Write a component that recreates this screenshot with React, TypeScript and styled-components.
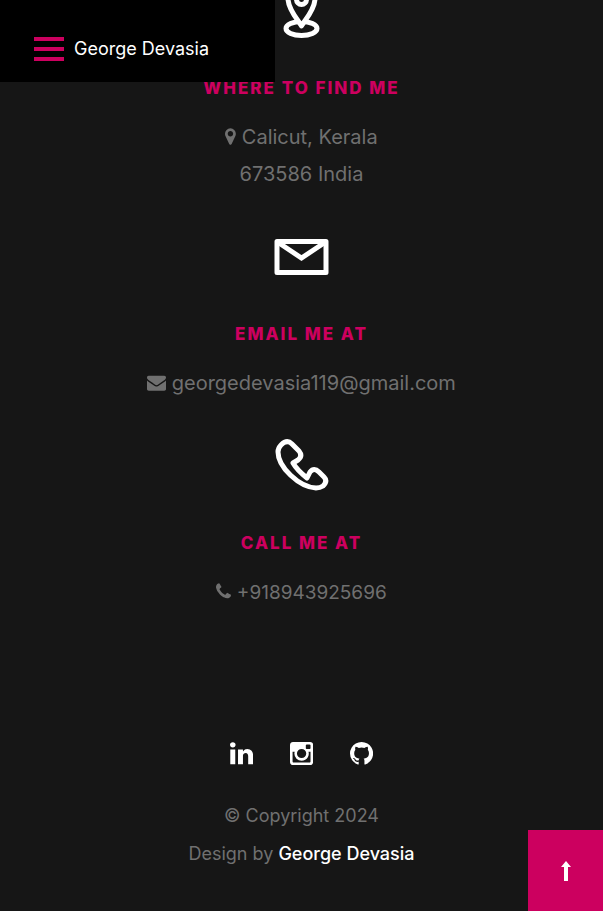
import React from "react";
import styled, { createGlobalStyle } from "styled-components";

const pink = "#cc005f";
const grey = "#707070";
const dark = "#161616";

const GlobalStyle = createGlobalStyle`
  *, *::before, *::after { box-sizing: border-box; }
  body {
    margin: 0;
    background: ${dark};
    color: ${grey};
    font-family: Inter, "Open Sans", sans-serif;
    font-size: 20px;
    line-height: 37px;
    overflow-x: hidden;
  }
  a { color: inherit; text-decoration: none; }
`;

const Header = styled.header`
  position: fixed;
  top: 0;
  left: 0;
  z-index: 2;
  display: flex;
  align-items: center;
  gap: 10px;
  padding: 28px 66px 12px 34px;
  background: #000;
`;

const MenuButton = styled.button`
  display: flex;
  flex-direction: column;
  justify-content: center;
  gap: 6px;
  width: 30px;
  height: 42px;
  padding: 0;
  border: 0;
  background: none;
  cursor: pointer;
`;

const MenuBar = styled.span`
  height: 4px;
  background: ${pink};
`;

const Brand = styled.a`
  && { color: #fff; }
  font-size: 18px;
  line-height: 42px;
  white-space: nowrap;
`;

const Contacts = styled.main`
  display: flex;
  flex-direction: column;
  gap: 34px;
  margin-top: -19px;
  text-align: center;
`;

const ContactItem = styled.section`
  display: flex;
  flex-direction: column;
  align-items: center;
`;

const OutlineIcon = styled.svg`
  display: block;
  width: 60px;
  height: 60px;
  fill: none;
  stroke: #fff;
  stroke-width: 5;
  stroke-linejoin: round;
  stroke-linecap: round;
`;

const Title = styled.h2`
  margin: 34px 0 18px;
  color: ${pink};
  font-size: 17px;
  line-height: 26px;
  font-weight: 800;
  letter-spacing: 2px;
  text-transform: uppercase;
`;

const Detail = styled.p`
  margin: 0;
`;

const PhoneLink = styled.a`
  font-size: 19px;
`;

const Glyph = styled.svg<{ $size: number }>`
  height: ${(p) => p.$size}px;
  fill: currentColor;
  vertical-align: -2px;
`;

const Footer = styled.footer`
  display: flex;
  flex-direction: column;
  align-items: center;
  padding: 123px 20px 38px;
  font-size: 18px;
  line-height: 38px;
  text-align: center;
`;

const Socials = styled.nav`
  display: flex;
  gap: 37px;
  margin-bottom: 25px;
  color: #fff;
`;

const SocialLink = styled.a`
  display: flex;
  align-items: center;
  height: 38px;
`;

const Author = styled.a`
  && { color: #fff; }
  font-weight: 500;
`;

const ToTop = styled.button`
  position: fixed;
  right: 0;
  bottom: 0;
  z-index: 2;
  display: flex;
  align-items: center;
  justify-content: center;
  width: 75px;
  height: 81px;
  padding: 0;
  border: 0;
  color: #fff;
  background: ${pink};
  cursor: pointer;
`;

const marker =
  "M1152 640q0-106-75-181t-181-75-181 75-75 181 75 181 181 75 181-75 75-181zm256 0q0 109-33 179l-364 774q-16 33-47.5 52t-67.5 19-67.5-19-46.5-52l-365-774q-33-70-33-179 0-212 150-362t362-150 362 150 150 362z";
const envelope =
  "M1792 710v794q0 66-47 113t-113 47h-1472q-66 0-113-47t-47-113v-794q44 49 101 87 362 246 497 345 57 42 92.5 65.5t94.5 48 110 24.5h2q51 0 110-24.5t94.5-48 92.5-65.5q170-123 498-345 57-39 100-87zm0-294q0 79-49 151t-122 123q-376 261-468 325-10 7-42.5 30.5t-54 38-52 32.5-57.5 27-50 9h-2q-23 0-50-9t-57.5-27-52-32.5-54-38-42.5-30.5q-91-64-262-182.5t-205-142.5q-62-42-117-115.5t-55-136.5q0-78 41.5-130t118.5-52h1472q65 0 112.5 47t47.5 113z";
const phone =
  "M1600 1240q0 27-10 70.5t-21 68.5q-21 50-122 106-94 51-186 51-27 0-53-3.5t-57.5-12.5-47-14.5-55.5-20.5-49-18q-98-35-175-83-127-79-264-216t-216-264q-48-77-83-175-3-9-18-49t-20.5-55.5-14.5-47-12.5-57.5-3.5-53q0-92 51-186 56-101 106-122 25-11 68.5-21t70.5-10q14 0 21 3 18 6 53 76 11 19 30 54t35 63.5 31 53.5q3 4 17.5 25t21.5 35.5 7 28.5q0 20-28.5 50t-62 55-62 53-28.5 46q0 9 5 22.5t8.5 20.5 14 24 11.5 19q76 137 174 235t235 174q2 1 19 11.5t24 14 20.5 8.5 22.5 5q18 0 46-28.5t53-62 55-62 50-28.5q14 0 28.5 7t35.5 21.5 25 17.5q25 15 53.5 31t63.5 35 54 30q70 35 76 53 3 7 3 21z";
const linkedin =
  "M477 625v991h-330v-991h330zm21-306q1 73-50.5 122t-135.5 49h-2q-82 0-132-49t-50-122q0-74 51.5-122.5t134.5-48.5 133 48.5 51 122.5zm1166 729v568h-329v-530q0-105-40.5-164.5t-126.5-59.5q-63 0-105.5 34.5t-63.5 85.5q-11 30-11 81v553h-329q2-399 2-647t-1-296l-1-48h329v144h-2q20-32 41-56t56.5-52 87-43.5 114.5-15.5q171 0 275 113.5t104 332.5z";
const instagram =
  "M1490 1426v-648h-135q20 63 20 131 0 126-64 232.5t-174 168.5-240 62q-197 0-337-135.5t-140-327.5q0-68 20-131h-141v648q0 26 17.5 43.5t43.5 17.5h1069q25 0 43-17.5t18-43.5zm-284-533q0-124-90.5-211.5t-218.5-87.5q-127 0-217.5 87.5t-90.5 211.5 90.5 211.5 217.5 87.5q128 0 218.5-87.5t90.5-211.5zm284-360v-165q0-28-20-48.5t-49-20.5h-174q-29 0-49 20.5t-20 48.5v165q0 29 20 49t49 20h174q29 0 49-20t20-49zm174-208v1142q0 81-58 139t-139 58h-1142q-81 0-139-58t-58-139v-1142q0-81 58-139t139-58h1142q81 0 139 58t58 139z";
const github =
  "M896 128q209 0 385.5 103t279.5 279.5 103 385.5q0 251-146.5 451.5t-378.5 277.5q-27 5-40-7t-13-30q0-3 .5-76.5t.5-134.5q0-97-52-142 57-6 102.5-18t94-39 81-66.5 53-105 20.5-150.5q0-119-79-206 37-91-8-204-28-9-81 11t-92 44l-38 24q-93-26-192-26t-192 26q-16-11-42.5-27t-83.5-38.5-85-13.5q-45 113-8 204-79 87-79 206 0 85 20.5 150t52.5 105 80.5 67 94 39 102.5 18q-39 36-49 103-21 10-45 15t-57 5-65.5-21.5-55.5-62.5q-19-32-48.5-52t-49.5-24l-20-3q-21 0-29 4.5t-5 11.5 9 14 13 12l7 5q22 10 43.5 38t31.5 51l10 23q13 38 44 61.5t67 30 69.5 7 55.5-3.5l23-4q0 38 .5 88.5t.5 54.5q0 18-13 30t-40 7q-232-77-378.5-277.5t-146.5-451.5q0-209 103-385.5t279.5-279.5 385.5-103z";

const socials = [
  { name: "LinkedIn", href: "#linkedin", path: linkedin },
  { name: "Instagram", href: "#instagram", path: instagram },
  { name: "GitHub", href: "#github", path: github },
];

export default function App() {
  return (
    <>
      <GlobalStyle />
      <Header>
        <MenuButton type="button" aria-label="Open menu">
          <MenuBar />
          <MenuBar />
          <MenuBar />
        </MenuButton>
        <Brand href="#home">George Devasia</Brand>
      </Header>

      <Contacts>
        <ContactItem>
          <OutlineIcon viewBox="0 0 60 60" aria-hidden="true">
            <ellipse cx="29.500" cy="47.500" rx="15.500" ry="7" />
            <path
              d="M29.500 45C27 40 16 29 16 17.500a13.500 13.500 0 0 1 27 0C43 29 32 40 29.500 45Z"
              fill={dark}
            />
            <circle cx="29.500" cy="18.500" r="5" />
          </OutlineIcon>
          <Title>Where to find me</Title>
          <Detail>
            <Glyph $size={19} viewBox="384 0 1024 1792" aria-hidden="true">
              <path d={marker} />
            </Glyph>{" "}
            Calicut, Kerala
          </Detail>
          <Detail>673586 India</Detail>
        </ContactItem>

        <ContactItem>
          <OutlineIcon viewBox="0 0 60 60" aria-hidden="true">
            <rect x="5" y="14.500" width="49" height="31" />
            <path d="M7 16 29.500 31 52 16" strokeLinejoin="miter" />
          </OutlineIcon>
          <Title>Email me at</Title>
          <Detail>
            <Glyph $size={19} viewBox="0 0 1792 1792" aria-hidden="true">
              <path d={envelope} />
            </Glyph>{" "}
            <a href="mailto:georgedevasia119@gmail.com">georgedevasia119@gmail.com</a>
          </Detail>
        </ContactItem>

        <ContactItem>
          <OutlineIcon viewBox="0 0 60 60" aria-hidden="true">
            <path d="M9 9Q15 3 20 8L27 15Q31 20 26 24L21 27Q25 34 35 42L38 36Q42 31 47 36L52 41Q56 45 51 50Q48 52 44 52C27 51 6 31 6 16Q6 12 9 9Z" />
          </OutlineIcon>
          <Title>Call me at</Title>
          <Detail>
            <Glyph $size={19} viewBox="192 0 1408 1792" aria-hidden="true">
              <path d={phone} />
            </Glyph>{" "}
            <PhoneLink href="tel:+918943925696">+918943925696</PhoneLink>
          </Detail>
        </ContactItem>
      </Contacts>

      <Footer>
        <Socials aria-label="Social profiles">
          {socials.map((s) => (
            <SocialLink key={s.name} href={s.href} aria-label={s.name}>
              <Glyph $size={27} viewBox="128 0 1536 1792" aria-hidden="true">
                <path d={s.path} />
              </Glyph>
            </SocialLink>
          ))}
        </Socials>
        <Detail>© Copyright 2024</Detail>
        <Detail>
          Design by <Author href="#home">George Devasia</Author>
        </Detail>
      </Footer>

      <ToTop
        type="button"
        aria-label="Back to top"
        onClick={() => window.scrollTo({ top: 0, behavior: "smooth" })}
      >
        <svg width="10" height="20" viewBox="0 0 10 20" fill="currentColor" aria-hidden="true">
          <path d="M5 0 10 6H7V20H3V6H0Z" />
        </svg>
      </ToTop>
    </>
  );
}
